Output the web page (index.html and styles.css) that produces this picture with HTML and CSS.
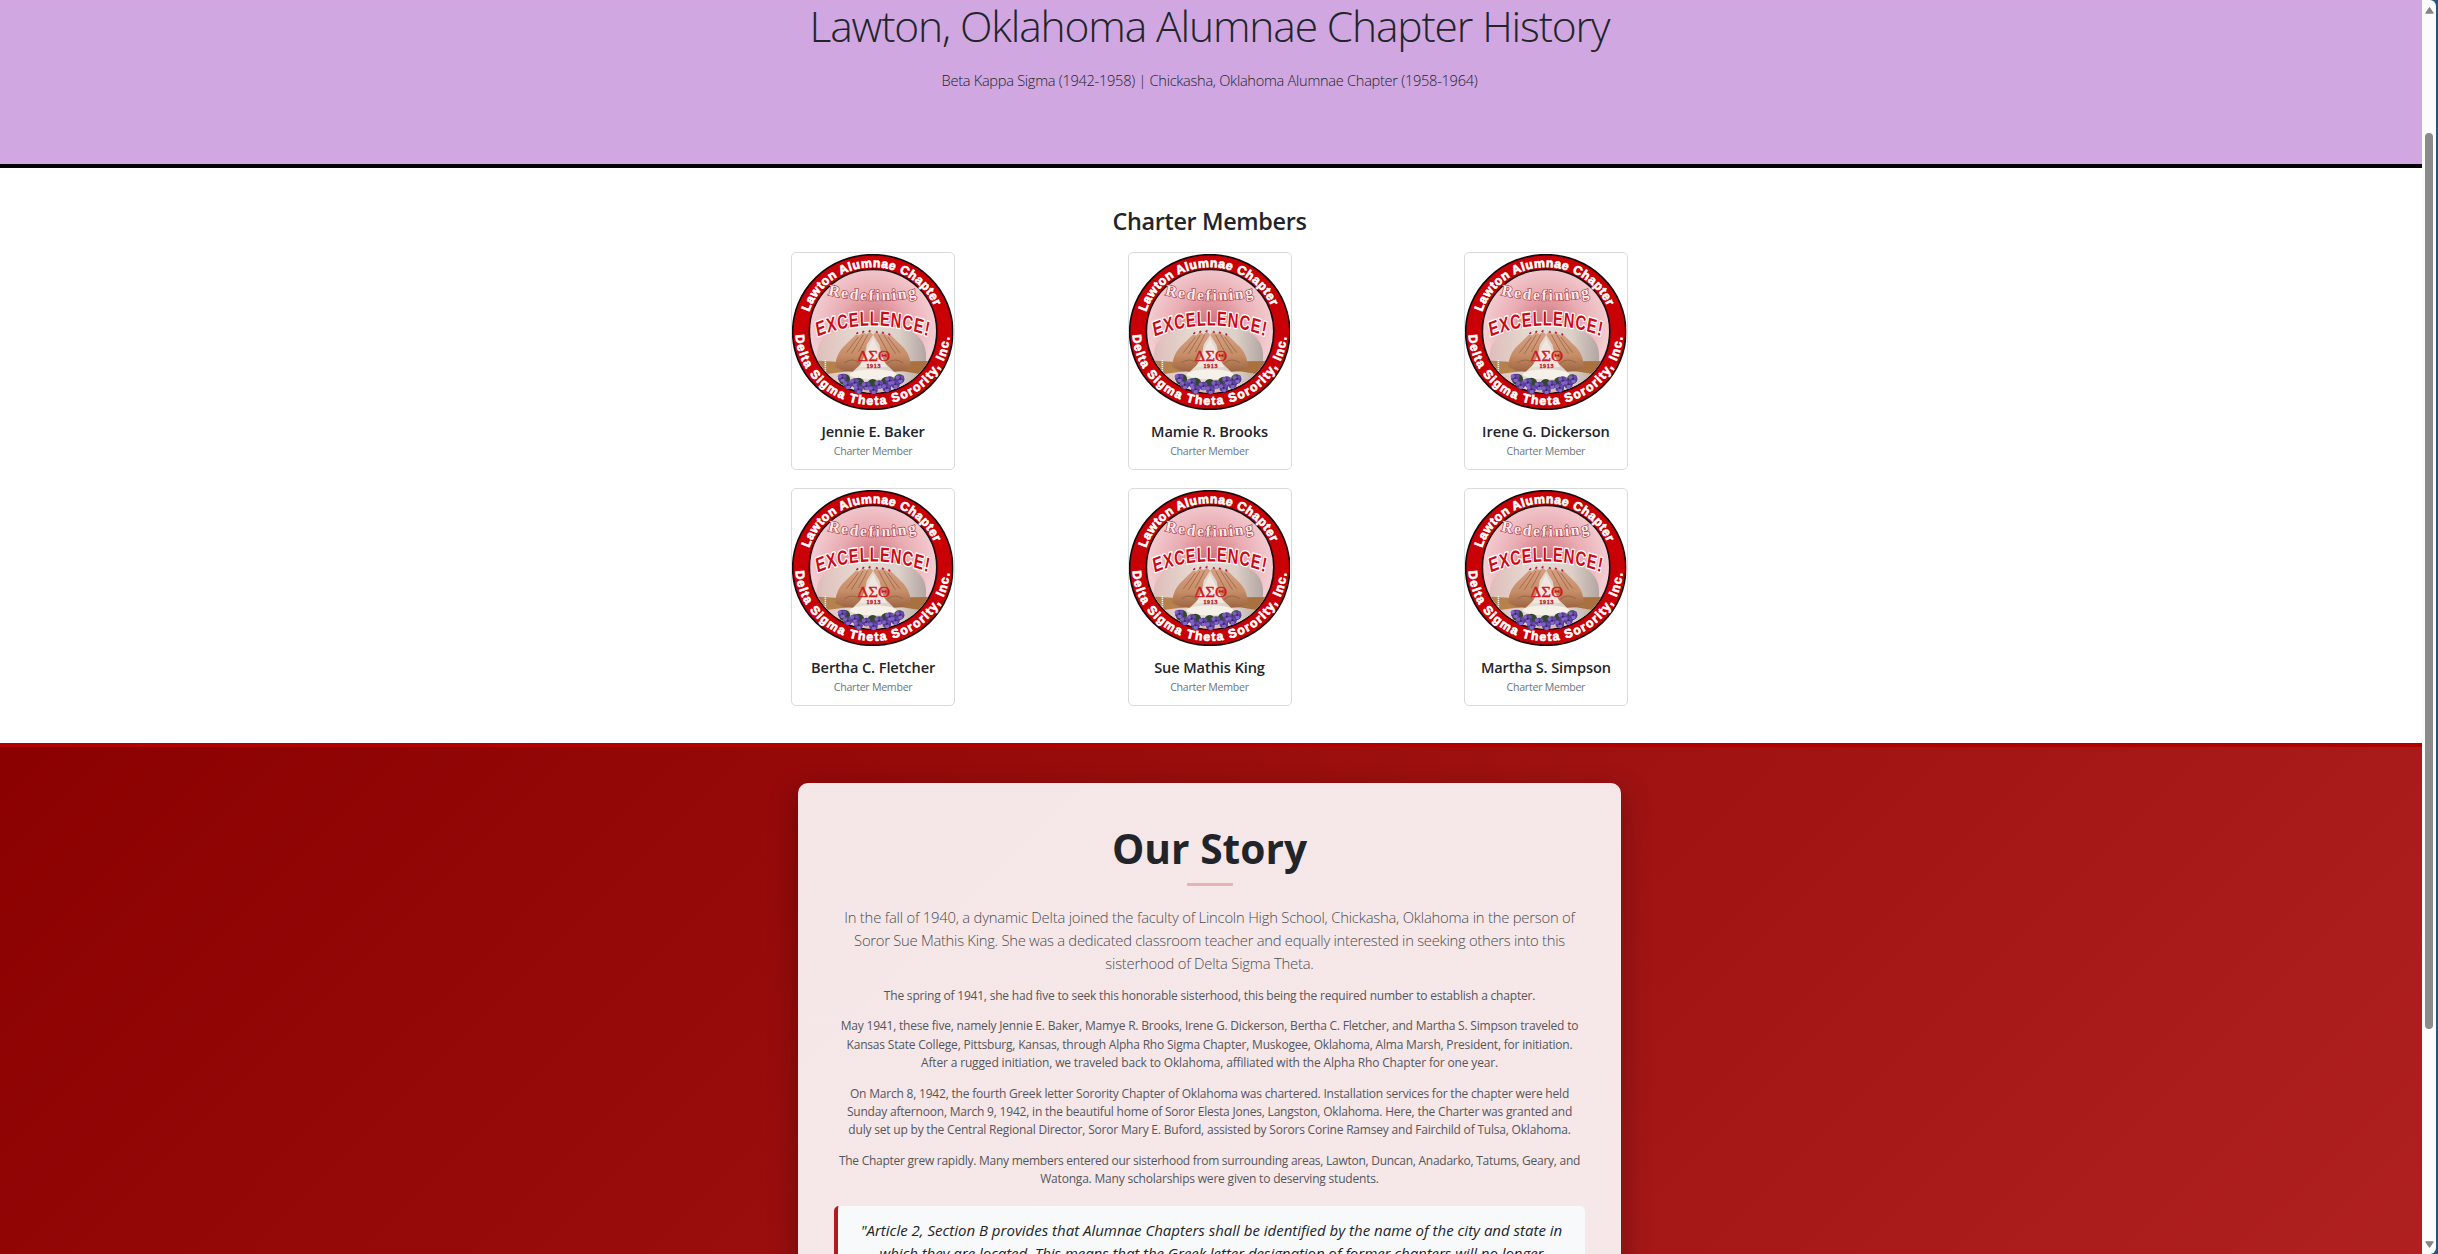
FILE: index.html
```
<!DOCTYPE html>
<html lang="en">
<head>
<meta charset="utf-8">
<title>Lawton, Oklahoma Alumnae Chapter History</title>
<link rel="stylesheet" href="styles.css">
</head>
<body>
<svg class="defs" aria-hidden="true">
  <defs>
    <radialGradient id="sky" cx=".5" cy=".45" r=".62">
      <stop offset="0" stop-color="#cf6d76"/><stop offset=".45" stop-color="#e9adb3"/><stop offset=".8" stop-color="#f3cdd2"/><stop offset="1" stop-color="#e6adb3"/>
    </radialGradient>
    <linearGradient id="skin" x1="0" y1="0" x2="0" y2="1">
      <stop offset="0" stop-color="#d6a184"/><stop offset=".6" stop-color="#c68d68"/><stop offset="1" stop-color="#9c6440"/>
    </linearGradient>
    <linearGradient id="ground" x1="0" y1="0" x2="1" y2="0">
      <stop offset="0" stop-color="#dfbdbb"/><stop offset=".4" stop-color="#e6dcd2"/><stop offset=".75" stop-color="#dcd0c8"/><stop offset="1" stop-color="#b3a5a1"/>
    </linearGradient>
    <clipPath id="disc"><ellipse cx="266" cy="258" rx="189" ry="184"/></clipPath>
    <path id="arcTop" d="M74 200A200 191 0 0 1 456 200"/>
    <path id="arcBottom" d="M34 260A231 219 0 0 0 496 260"/>
    <path id="arcRedefining" d="M130 149Q264 180 402 153"/>
    <path id="arcExcellence" d="M137 274Q370 207 604 274"/>
    <g id="bloom">
      <circle r="13" fill="#573c94"/><circle cx="-8" cy="-5" r="6" fill="#7d60c2"/><circle cx="7" cy="-6" r="5" fill="#6a4bb0"/><circle cx="1" cy="7" r="6" fill="#8468cb"/><circle r="3" fill="#3a2466"/>
    </g>
    <symbol id="seal" viewBox="23 26 484 468" preserveAspectRatio="none">
      <ellipse cx="265" cy="260" rx="240" ry="232" fill="#c90005" stroke="#160a0a" stroke-width="5"/>
      <ellipse cx="266" cy="258" rx="191" ry="186" fill="url(#sky)" stroke="#210d0e" stroke-width="5"/>
      <g clip-path="url(#disc)">
        <path d="M75 350H460V450H75Z" fill="#d9bab5"/>
        <path d="M98 345C88 262 170 246 264 238C372 240 434 268 424 350L390 430H130Z" fill="url(#ground)"/>
        <path d="M75 345L165 350L190 378L110 388H75Z" fill="#b5814c"/>
        <path d="M460 347L372 348L345 376L420 388H460Z" fill="#a8713d"/>
        <path d="M123 344V400" stroke="#f3eee6" stroke-width="5" stroke-dasharray="4 2"/>
        <path d="M153 365C153 338 165 315 182 300L214 268L224 270L236 261L246 266L257 259L266 268L247 298L238 348L205 379L180 378Z" fill="url(#skin)"/>
        <path d="M379 365C379 338 367 315 350 300L318 268L308 270L296 261L286 266L275 259L266 268L285 298L296 348L329 379L354 378Z" fill="url(#skin)"/>
        <path d="M222 275L186 322M236 269L201 325M250 268L222 320M310 275L346 322M298 269L333 325M282 268L310 320M180 352Q208 335 226 354M355 352Q330 335 308 354" fill="none" stroke="#8e5838" stroke-width="2"/>
        <path d="M216 266l5-5M234 262l5-5M253 260l5-5M275 258l5 4M293 260l5 4M312 265l5 4" stroke="#b51f42" stroke-width="5"/>
        <path d="M266 279L308 365H224Z" fill="#f1e6df"/>
        <ellipse cx="266" cy="387" rx="70" ry="15" fill="#f5f0e8"/>
      </g>
      <text class="seal-greek" x="268" y="347" textLength="98" lengthAdjust="spacingAndGlyphs">ΔΣΘ</text>
      <text class="seal-year" x="267" y="368" textLength="42">1913</text>
      <g fill="#31482c"><circle cx="180" cy="402" r="17"/><circle cx="222" cy="415" r="18"/><circle cx="265" cy="418" r="17"/><circle cx="307" cy="412" r="18"/><circle cx="344" cy="402" r="15"/></g>
      <use href="#bloom" x="174" y="398"/><use href="#bloom" x="190" y="419"/><use href="#bloom" x="211" y="412"/><use href="#bloom" x="222" y="432"/><use href="#bloom" x="246" y="422"/><use href="#bloom" x="267" y="434"/><use href="#bloom" x="284" y="418"/><use href="#bloom" x="307" y="428"/><use href="#bloom" x="316" y="406"/><use href="#bloom" x="333" y="417"/><use href="#bloom" x="347" y="401"/>
      <text class="seal-ring" textLength="480"><textPath href="#arcTop">Lawton Alumnae Chapter</textPath></text>
      <text class="seal-ring" textLength="682"><textPath href="#arcBottom" startOffset="9">Delta Sigma Theta Sorority, Inc.</textPath></text>
      <text class="seal-redefining" textLength="268"><textPath href="#arcRedefining">Redefining</textPath></text>
      <g transform="scale(.72 1)"><text class="seal-excellence" textLength="468"><textPath href="#arcExcellence">EXCELLENCE!</textPath></text></g>
    </symbol>
  </defs>
</svg>

<div class="window">
  <div class="page">
    <header class="hero">
      <h1>Lawton, Oklahoma Alumnae Chapter History</h1>
      <p>Beta Kappa Sigma (1942-1958) | Chickasha, Oklahoma Alumnae Chapter (1958-1964)</p>
    </header>

    <section class="members">
      <h2>Charter Members</h2>
      <div class="member-grid">
        <article class="member"><svg class="seal"><use href="#seal"/></svg><h3>Jennie E. Baker</h3><p>Charter Member</p></article>
        <article class="member"><svg class="seal"><use href="#seal"/></svg><h3>Mamie R. Brooks</h3><p>Charter Member</p></article>
        <article class="member"><svg class="seal"><use href="#seal"/></svg><h3>Irene G. Dickerson</h3><p>Charter Member</p></article>
        <article class="member"><svg class="seal"><use href="#seal"/></svg><h3>Bertha C. Fletcher</h3><p>Charter Member</p></article>
        <article class="member"><svg class="seal"><use href="#seal"/></svg><h3>Sue Mathis King</h3><p>Charter Member</p></article>
        <article class="member"><svg class="seal"><use href="#seal"/></svg><h3>Martha S. Simpson</h3><p>Charter Member</p></article>
      </div>
    </section>

    <section class="story">
      <div class="story-card">
        <h2>Our Story</h2>
        <div class="rule"></div>
        <p class="lead"><span>In the fall of 1940, a dynamic Delta joined the faculty of Lincoln High School, Chickasha, Oklahoma in the person of</span> <span class="tight">Soror Sue Mathis King. She was a dedicated classroom teacher and equally interested in seeking others into this</span> <span>sisterhood of Delta Sigma Theta.</span></p>
        <p><span>The spring of 1941, she had five to seek this honorable sisterhood, this being the required number to establish a chapter.</span></p>
        <p><span>May 1941, these five, namely Jennie E. Baker, Mamye R. Brooks, Irene G. Dickerson, Bertha C. Fletcher, and Martha S. Simpson traveled to</span> <span>Kansas State College, Pittsburg, Kansas, through Alpha Rho Sigma Chapter, Muskogee, Oklahoma, Alma Marsh, President, for initiation.</span> <span class="loose">After a rugged initiation, we traveled back to Oklahoma, affiliated with the Alpha Rho Chapter for one year.</span></p>
        <p><span>On March 8, 1942, the fourth Greek letter Sorority Chapter of Oklahoma was chartered. Installation services for the chapter were held</span> <span>Sunday afternoon, March 9, 1942, in the beautiful home of Soror Elesta Jones, Langston, Oklahoma. Here, the Charter was granted and</span> <span>duly set up by the Central Regional Director, Soror Mary E. Buford, assisted by Sorors Corine Ramsey and Fairchild of Tulsa, Oklahoma.</span></p>
        <p><span class="tight">The Chapter grew rapidly. Many members entered our sisterhood from surrounding areas, Lawton, Duncan, Anadarko, Tatums, Geary, and</span> <span>Watonga. Many scholarships were given to deserving students.</span></p>
        <blockquote><span>"Article 2, Section B provides that Alumnae Chapters shall be identified by the name of the city and state in</span> <span>which they are located. This means that the Greek letter designation of former chapters will no longer</span></blockquote>
      </div>
    </section>
  </div>
  <div class="scrollbar">
    <svg class="arrow" viewBox="0 0 9 7"><path d="M4.5 0.5L8.3 6.2H.7Z"/></svg>
    <div class="thumb"></div>
    <svg class="arrow down" viewBox="0 0 9 7"><path d="M4.5 6.5L.7 .8H8.3Z"/></svg>
  </div>
</div>
</body>
</html>
```
FILE: styles.css
```
* { box-sizing: border-box; }
body {
  margin: 0;
  height: 1254px;
  overflow: hidden;
  background: #1d5583;
  color: #212529;
  font-family: "Open Sans", "Noto Sans", sans-serif;
}
h1, h2, h3, p, blockquote { margin: 0; }
.defs { position: absolute; width: 0; height: 0; }

.window {
  display: flex;
  width: 2436px;
  height: 1254px;
  overflow: hidden;
  background: #fcfcfc;
  border-radius: 0 6px 6px 0;
}
.page { width: 2422px; height: 1254px; overflow: hidden; background: #fff; text-align: center; }

.hero {
  height: 168px;
  padding-right: 3px;
  background: #d0a7e1;
  border-top: 1px solid #d5a5de;
  border-bottom: 4px solid #050207;
}
.hero h1 { font-size: 42.5px; line-height: 50px; font-weight: 300; letter-spacing: -1.13px; }
.hero p { margin-top: 17.6px; font-size: 14.6px; line-height: 22px; font-weight: 300; letter-spacing: -.28px; }

.members { height: 575px; padding: 38.6px 3px 0 0; }
.members h2 { font-size: 23.4px; line-height: 28px; font-weight: 600; letter-spacing: -.35px; }
.member-grid {
  display: grid;
  grid-template-columns: repeat(3, 164px);
  column-gap: 172.4px;
  row-gap: 18px;
  justify-content: center;
  margin-top: 17.6px;
}
.member { height: 218px; border: 1px solid #d9dadb; border-radius: 5px; background: #fff; }
.seal { display: block; width: 161.5px; height: 156px; margin: .5px auto 0; }
.member h3 { margin-top: 12.4px; font-size: 14.6px; line-height: 18px; font-weight: 600; letter-spacing: -.1px; }
.member p { margin-top: 3px; font-size: 10.6px; line-height: 16px; letter-spacing: -.26px; color: #6c757d; }

.seal-ring { font: bold 37px "Liberation Sans", Arial, sans-serif; fill: #fff; stroke: #fff; stroke-width: 2; }
.seal-redefining { font: bold 47px "Liberation Serif", serif; fill: #fbe9e9; stroke: #a83e45; stroke-width: 4; paint-order: stroke; }
.seal-excellence { font: bold 61px "Liberation Sans", Arial, sans-serif; fill: #cb0b16; stroke: #fff; stroke-width: 8; stroke-linejoin: round; paint-order: stroke; }
.seal-greek { font: 42px "Liberation Serif", serif; fill: #cf1720; stroke: #cf1720; text-anchor: middle; }
.seal-year { font: bold 18px "Liberation Serif", serif; fill: #b91e29; stroke: #b91e29; text-anchor: middle; }

.story {
  height: 720px;
  padding: 36px 3px 0 0;
  border-top: 4px solid #b00000;
  background: linear-gradient(135deg, #8b0000, #b22222) border-box;
}
.story-card {
  width: 823px;
  height: 640px;
  margin: 0 auto;
  padding: 41px 36px;
  border-radius: 10px;
  background: linear-gradient(135deg, #f5e7e8, #f5e8e8);
  box-shadow: 0 10px 30px rgba(0, 0, 0, .3);
}
.story-card h2 { font-size: 40.7px; line-height: 48px; font-weight: 700; }
.rule { width: 46px; height: 3px; margin: 11.3px auto 19.9px; border-radius: 1px; background: #e5b2b5; }
.story-card span { display: block; margin: 0 -20px; white-space: nowrap; }
.story-card p { margin-bottom: 12.4px; font-size: 12px; line-height: 18.3px; letter-spacing: -.2px; color: #56565a; }
.story-card .loose { letter-spacing: -.157px; }
.story-card .tight { letter-spacing: -.262px; }
.story-card .lead { margin-bottom: 12.2px; font-size: 14.8px; line-height: 22.8px; font-weight: 300; letter-spacing: -.21px; color: #4c4d51; }
.story-card .lead .tight { letter-spacing: -.277px; }
.story-card blockquote {
  height: 100px;
  margin-top: 17.6px;
  padding: 12.8px 0 0;
  border-left: 4px solid #b11b1f;
  border-radius: 5px;
  background: #f8f9fa;
  font-size: 15px;
  line-height: 22.8px;
  font-style: italic;
}
.story-card blockquote span:last-child { letter-spacing: -.05px; }

.scrollbar { display: flex; flex-direction: column; align-items: center; width: 14px; padding: 7px 0 6px; }
.arrow { width: 9px; height: 7px; fill: #858585; stroke: #858585; stroke-linejoin: round; }
.thumb { width: 8.5px; height: 896px; margin-top: 119px; border-radius: 5px; background: #8b8b8b; }
.down { margin-top: auto; }
```
